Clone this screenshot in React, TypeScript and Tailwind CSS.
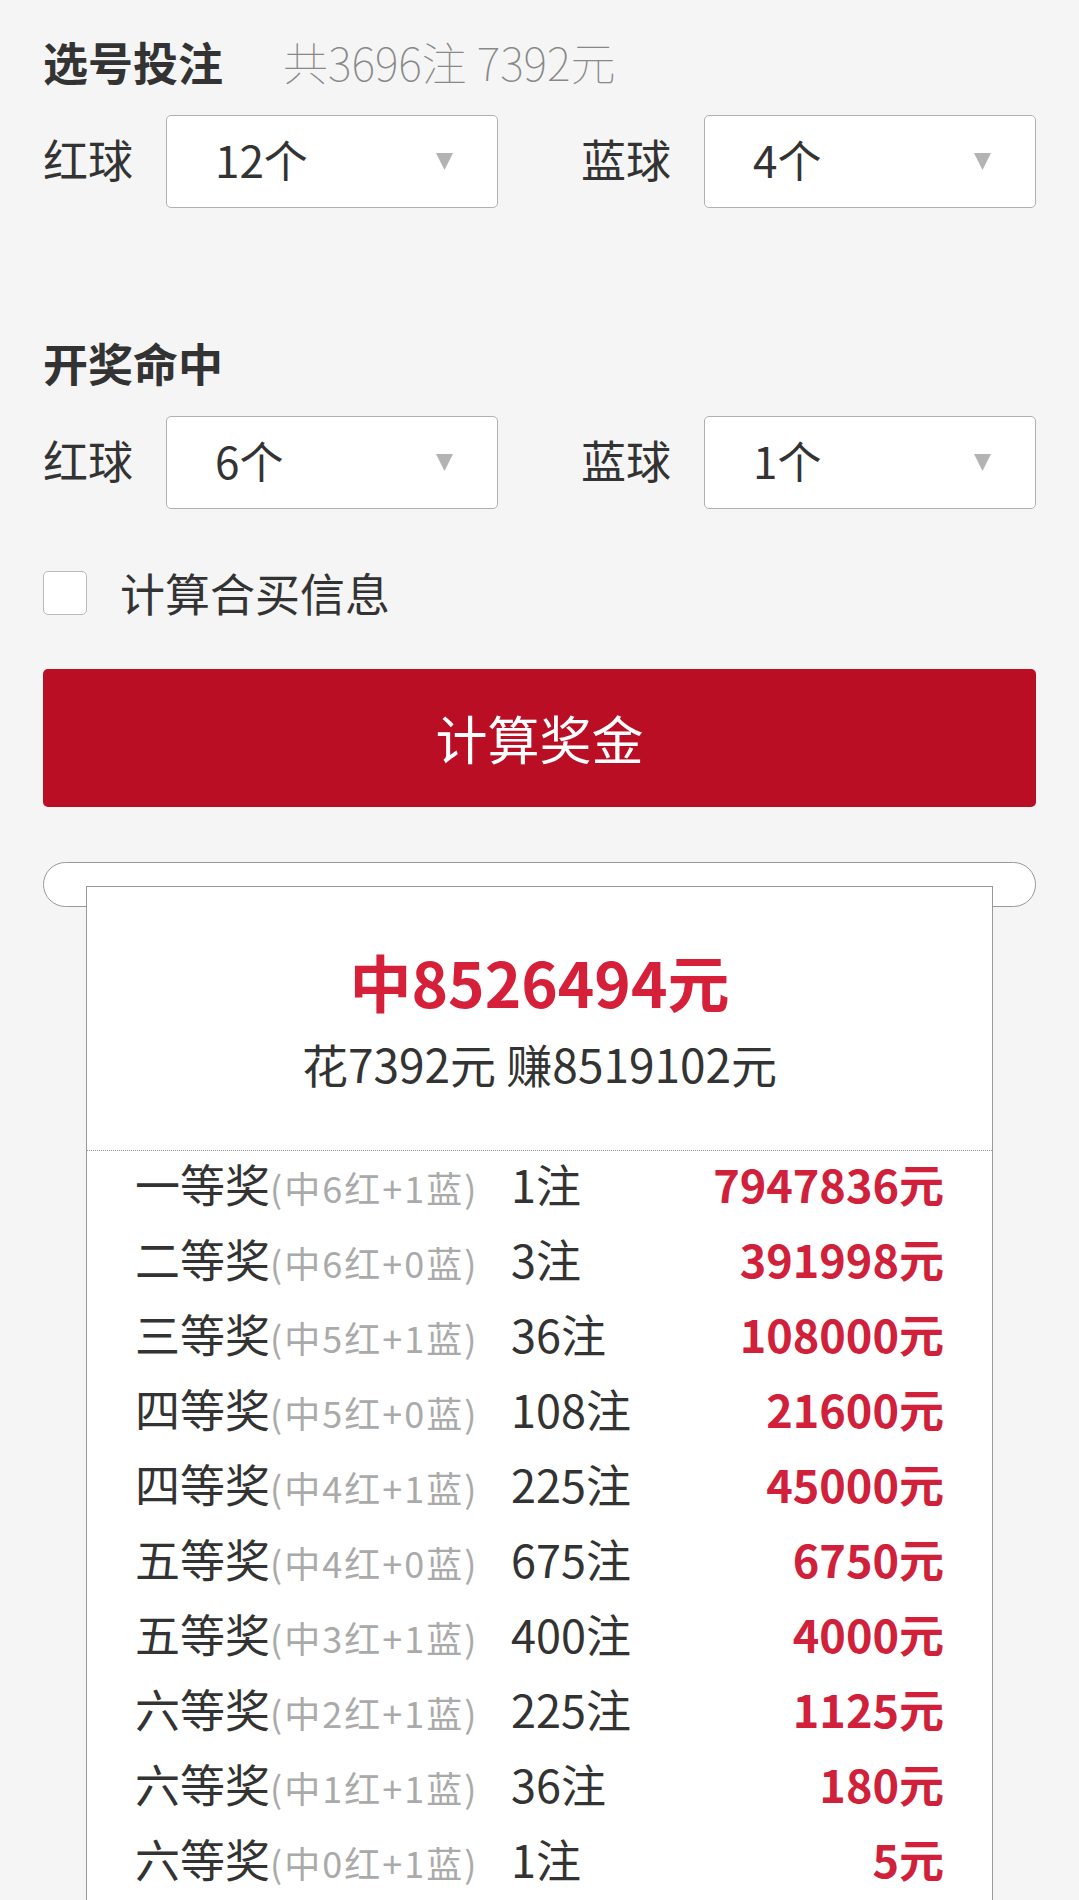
import React from 'react';

const prizes = [
  { name: '一等奖', hit: '中6红+1蓝', count: 1, amount: 7947836 },
  { name: '二等奖', hit: '中6红+0蓝', count: 3, amount: 391998 },
  { name: '三等奖', hit: '中5红+1蓝', count: 36, amount: 108000 },
  { name: '四等奖', hit: '中5红+0蓝', count: 108, amount: 21600 },
  { name: '四等奖', hit: '中4红+1蓝', count: 225, amount: 45000 },
  { name: '五等奖', hit: '中4红+0蓝', count: 675, amount: 6750 },
  { name: '五等奖', hit: '中3红+1蓝', count: 400, amount: 4000 },
  { name: '六等奖', hit: '中2红+1蓝', count: 225, amount: 1125 },
  { name: '六等奖', hit: '中1红+1蓝', count: 36, amount: 180 },
  { name: '六等奖', hit: '中0红+1蓝', count: 1, amount: 5 },
];

const Select = ({ value }: { value: string }) => (
  <div className="flex h-[93px] flex-1 items-center justify-between rounded-[5px] border border-[#b0b0b0] bg-white pb-[6px] pl-[48px] pr-[44px]">
    <span className="text-[44px] text-[#333]">{value}</span>
    <svg width="17" height="17" viewBox="0 0 17 17" className="mt-[6px]">
      <polygon points="0,0 17,0 8.5,17" fill="#b3b3b3" />
    </svg>
  </div>
);

const BallRow = ({ red, blue }: { red: string; blue: string }) => (
  <div className="grid grid-cols-2 gap-[83px]">
    <div className="flex items-center">
      <span className="w-[123px] pb-[6px] text-[45px] text-[#333]">红球</span>
      <Select value={red} />
    </div>
    <div className="flex items-center">
      <span className="w-[123px] pb-[6px] text-[45px] text-[#333]">蓝球</span>
      <Select value={blue} />
    </div>
  </div>
);

const App = () => {
  return (
    <div className="min-h-[1900px] overflow-hidden bg-[#f5f5f5] px-[43px] pt-[34px] font-['Noto_Sans_CJK_SC',sans-serif]">
      <div className="flex items-center leading-[56px]">
        <h2 className="text-[45px] font-bold text-[#333]">选号投注</h2>
        <span className="ml-[60px] text-[45px] font-thin text-[#888]">共3696注 7392元</span>
      </div>
      <div className="mt-[25px]">
        <BallRow red="12个" blue="4个" />
      </div>

      <h2 className="mt-[127px] text-[45px] font-bold leading-[56px] text-[#333]">开奖命中</h2>
      <div className="mt-[25px]">
        <BallRow red="6个" blue="1个" />
      </div>

      <label className="mt-[56px] flex items-center">
        <span className="h-[44px] w-[44px] rounded-[5px] border border-[#bbb] bg-white" />
        <span className="ml-[33px] text-[45px] leading-[56px] text-[#333]">计算合买信息</span>
      </label>

      <button className="mt-[48px] flex h-[138px] w-full items-center justify-center rounded-[5px] bg-[#b90e24] text-[52px] text-white">
        计算奖金
      </button>

      <div className="mt-[55px] h-[45px] rounded-full border border-[#999] bg-white" />
      <div className="relative mx-[43px] -mt-[21px] border-x border-t border-[#999] bg-white">
        <div className="pb-[59px] pt-[59px] text-center">
          <div className="text-[62px] font-bold leading-[70px] text-[#d6203a]">中8526494元</div>
          <div className="mt-[19px] text-[46px] leading-[56px] text-[#333]">花7392元 赚8519102元</div>
        </div>
        <div className="border-t border-dotted border-[#999]" />
        <div className="px-[48px]">
          {prizes.map((p, i) => (
            <div key={i} className="flex h-[75px] items-center pb-[9px]">
              <div className="w-[376px] whitespace-nowrap text-[45px] text-[#333]">
                {p.name}
                <span className="text-[36px] tracking-[2px] text-[#aaa]">({p.hit})</span>
              </div>
              <div className="flex-1 text-[45px] text-[#333]">{p.count}注</div>
              <div className="text-right text-[45px] font-semibold text-[#d0203a]">{p.amount}元</div>
            </div>
          ))}
        </div>
      </div>
    </div>
  );
};

export default App;
